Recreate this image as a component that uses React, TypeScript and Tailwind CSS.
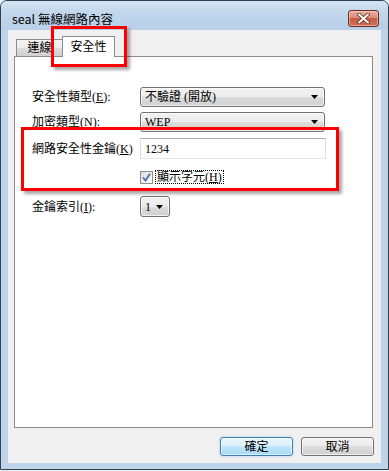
import React from "react";

const cjk = "font-['Liberation_Serif','Noto_Sans_CJK_TC',serif]";
const ui = "font-['Noto_Sans_CJK_TC','Liberation_Sans',sans-serif]";

function Arrow() {
  return (
    <svg width="7" height="4" viewBox="0 0 7 4" className="shrink-0">
      <path d="M0 0 H7 L3.5 4 Z" fill="#000" />
    </svg>
  );
}

function Combo({ text, width }: { text: string; width: string }) {
  return (
    <div
      className={`${width} h-full flex items-center justify-between pl-[4px] pr-[6px] rounded-[3px] border border-[#707070] bg-[linear-gradient(to_bottom,#f2f2f2_0%,#ebebeb_50%,#dddddd_50%,#cfcfcf_100%)] shadow-[inset_0_0_0_1px_rgba(255,255,255,0.7)]`}
    >
      <span className={`${cjk} text-[12px] leading-none text-black whitespace-nowrap`}>{text}</span>
      <Arrow />
    </div>
  );
}

function Label({ pre, key1, post }: { pre: string; key1: string; post: string }) {
  return (
    <div className={`w-[108px] shrink-0 ${cjk} text-[12px] leading-none text-black whitespace-nowrap`}>
      {pre}(<span className="underline">{key1}</span>){post}
    </div>
  );
}

export default function App() {
  return (
    <div className="w-[389px] h-[471px] bg-[#e6f2fa] relative overflow-hidden">
      <div className="w-[389px] h-[470px] border border-[#33414f] rounded-t-[7px] bg-[#bdd4eb] flex flex-col overflow-hidden">
        {/* Title bar */}
        <div className="h-[29px] shrink-0 flex justify-between pl-[11px] pr-[9px] bg-[linear-gradient(to_bottom,#d3e3f2_0%,#c2d7ec_40%,#b8cfe8_100%)]">
          <span className={`pt-[10px] text-[12.5px] leading-[16px] text-black ${ui}`}>seal 無線網路內容</span>
          <div className="mt-[9px] w-[31px] h-[17px] rounded-[3px] border border-[#6e2a1d] bg-[linear-gradient(to_bottom,#eab0a2_0%,#dc8b78_45%,#c65c45_50%,#cf6f55_100%)] shadow-[inset_0_0_0_1px_rgba(255,220,210,0.5)] flex items-center justify-center">
            <svg width="13" height="11" viewBox="0 0 13 11">
              <path d="M2 1.5 L11 9.5 M11 1.5 L2 9.5" stroke="#5a2a22" strokeWidth="3.6" strokeLinecap="round" />
              <path d="M2 1.5 L11 9.5 M11 1.5 L2 9.5" stroke="#ffffff" strokeWidth="2" strokeLinecap="round" />
            </svg>
          </div>
        </div>

        {/* Client area */}
        <div className="flex-1 flex px-[7px] pb-[6px]">
          <div className="flex-1 bg-[#f0f0f0] flex flex-col">
            {/* Tabs */}
            <div className="mt-[6px] ml-[8px] h-[20px] flex items-end">
              <div className={`w-[46px] h-[17px] border-t border-l border-[#898c95] bg-[linear-gradient(to_bottom,#f3f3f3_0%,#ebebeb_50%,#dddddd_50%,#cfcfcf_100%)] flex items-center justify-center text-[12px] leading-none text-black ${cjk}`}>
                連線
              </div>
              <div className={`relative z-10 -mb-px w-[53px] h-[21px] border-t border-x border-[#898c95] bg-white flex items-center justify-center pb-[1px] text-[12px] leading-none text-black ${cjk}`}>
                安全性
              </div>
            </div>

            {/* Panel */}
            <div className="ml-[6px] w-[359px] h-[372px] border border-[#898c95] bg-white flex flex-col pl-[17px]">
              <div className="mt-[30px] h-[20px] flex items-center">
                <Label pre="安全性類型" key1="E" post=":" />
                <Combo text="不驗證 (開放)" width="w-[185px]" />
              </div>
              <div className="mt-[5px] h-[20px] flex items-center">
                <Label pre="加密類型" key1="N" post=":" />
                <Combo text="WEP" width="w-[185px]" />
              </div>
              <div className="mt-[6px] h-[21px] flex items-center">
                <Label pre="網路安全性金鑰" key1="K" post="" />
                <div className="w-[186px] h-full flex items-center pl-[4px] border border-[#abadb3] border-l-[#dbdfe6] border-r-[#dbdfe6] border-b-[#e3e9ef] bg-white">
                  <span className={`${cjk} text-[12px] leading-none text-black`}>1234</span>
                </div>
              </div>
              <div className="mt-[11px] h-[14px] flex items-center pl-[108px]">
                <div className="w-[13px] h-[13px] border border-[#8e8f8f] bg-[linear-gradient(135deg,#dcdcdc_0%,#ffffff_100%)] flex items-center justify-center">
                  <svg width="9" height="9" viewBox="0 0 9 9">
                    <path d="M1 4.5 L3.5 7.5 L8 0.8" stroke="#4a6aa5" strokeWidth="1.8" fill="none" />
                  </svg>
                </div>
                <div className={`ml-[2px] px-[1px] h-[14px] flex items-center border border-dotted border-black ${cjk} text-[12px] leading-none text-black`}>
                  顯示字元(<span className="underline">H</span>)
                </div>
              </div>
              <div className="mt-[12px] h-[21px] flex items-center">
                <Label pre="金鑰索引" key1="I" post=":" />
                <Combo text="1" width="w-[30px]" />
              </div>
            </div>

            {/* Buttons */}
            <div className="mt-[9px] flex justify-end gap-[8px] pr-[7px]">
              <div className={`w-[73px] h-[19px] rounded-[3px] border border-[#3c7fb1] bg-[linear-gradient(to_bottom,#eaf6fd_0%,#d9f0fc_50%,#bee6fd_50%,#a7d9f5_100%)] shadow-[inset_0_0_0_1px_rgba(255,255,255,0.6),0_0_2px_#7fc6ee] flex items-center justify-center text-[12px] leading-none text-black ${cjk}`}>
                確定
              </div>
              <div className={`w-[73px] h-[19px] rounded-[3px] border border-[#707070] bg-[linear-gradient(to_bottom,#f2f2f2_0%,#ebebeb_50%,#dddddd_50%,#cfcfcf_100%)] shadow-[inset_0_0_0_1px_rgba(255,255,255,0.7)] flex items-center justify-center text-[12px] leading-none text-black ${cjk}`}>
                取消
              </div>
            </div>
          </div>
        </div>
      </div>

      {/* Red annotation boxes */}
      <div className="absolute left-[51px] top-[26px] w-[76px] h-[41px] border-[3px] border-[#ff0000] shadow-[3px_3px_3px_rgba(0,0,0,0.35)] pointer-events-none" />
      <div className="absolute left-[21px] top-[127px] w-[318px] h-[64px] border-[3px] border-[#ff0000] shadow-[3px_3px_3px_rgba(0,0,0,0.35)] pointer-events-none" />
    </div>
  );
}
